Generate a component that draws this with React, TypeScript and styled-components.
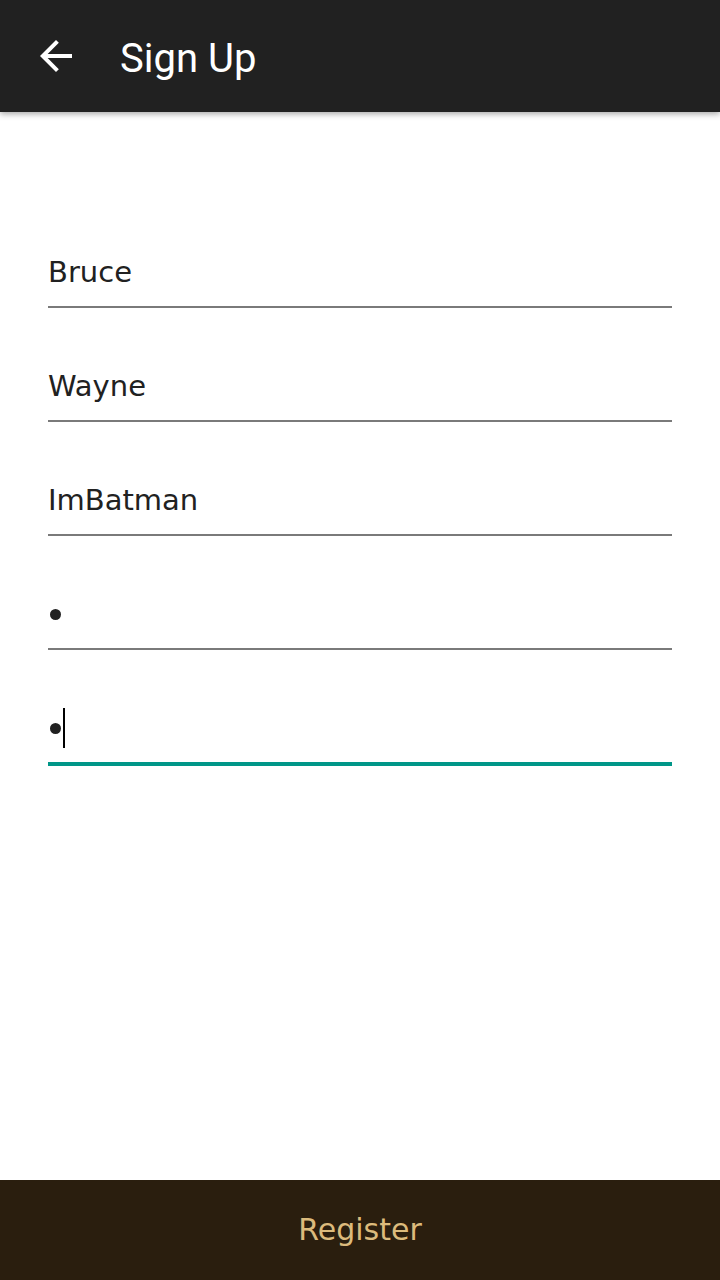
import React from "react";
import styled, { createGlobalStyle } from "styled-components";

const GlobalStyle = createGlobalStyle`
    html, body {
        margin: 0;
        padding: 0;
        background: #ffffff;
    }
    #root {
        height: 1280px;
    }
`;

const Screen = styled.div`
    width: 720px;
    height: 1280px;
    display: flex;
    flex-direction: column;
    background: #ffffff;
    font-family: "DejaVu Sans", "Noto Sans", sans-serif;
`;

const Toolbar = styled.header`
    height: 112px;
    flex-shrink: 0;
    display: flex;
    align-items: center;
    background: #212121;
    box-shadow: 0 2px 6px rgba(0, 0, 0, 0.35);
    position: relative;
    z-index: 1;
`;

const BackButton = styled.button`
    width: 112px;
    height: 112px;
    display: flex;
    align-items: center;
    padding: 0 0 0 32px;
    background: none;
    border: none;
    cursor: pointer;
`;

const Title = styled.h1`
    margin: 4px 0 0 8px;
    font-family: Roboto, "Liberation Sans", sans-serif;
    font-weight: 400;
    font-size: 40px;
    color: #ffffff;
`;

const Form = styled.main`
    flex: 1;
    display: flex;
    flex-direction: column;
    padding: 82px 48px 0;
`;

const Field = styled.div<{ $focused?: boolean }>`
    height: ${(p) => (p.$focused ? "116px" : "114px")};
    flex-shrink: 0;
    box-sizing: border-box;
    display: flex;
    align-items: flex-end;
    padding-bottom: 14px;
    border-bottom: ${(p) => (p.$focused ? "4px solid #009688" : "2px solid #7a7a7a")};
    font-size: 29px;
    color: #212121;
`;

const Value = styled.div`
    height: 40px;
    line-height: 40px;
    display: flex;
    align-items: center;
`;

const Caret = styled.span`
    width: 2px;
    height: 40px;
    margin-left: 2px;
    background: #000000;
`;

const Dot = styled.span`
    width: 11px;
    height: 11px;
    margin-left: 2px;
    border-radius: 50%;
    background: #212121;
`;

const RegisterButton = styled.button`
    height: 100px;
    flex-shrink: 0;
    border: none;
    background: #2a1e0e;
    color: #dcbb7c;
    font-family: "DejaVu Sans", "Noto Sans", sans-serif;
    font-size: 30px;
    padding-top: 0;
    cursor: pointer;
`;

const BackArrow = () => (
    <svg width="48" height="48" viewBox="0 0 24 24" fill="#ffffff">
        <path d="M20 11H7.83l5.59-5.59L12 4l-8 8 8 8 1.41-1.41L7.83 13H20v-2z" />
    </svg>
);

const App: React.FC = () => {
    return (
        <Screen>
            <GlobalStyle />
            <Toolbar>
                <BackButton aria-label="back"><BackArrow /></BackButton>
                <Title>Sign Up</Title>
            </Toolbar>
            <Form>
                <Field><Value>Bruce</Value></Field>
                <Field><Value>Wayne</Value></Field>
                <Field><Value>ImBatman</Value></Field>
                <Field><Value><Dot /></Value></Field>
                <Field $focused><Value><Dot /><Caret /></Value></Field>
            </Form>
            <RegisterButton>Register</RegisterButton>
        </Screen>
    );
};

export default App;
